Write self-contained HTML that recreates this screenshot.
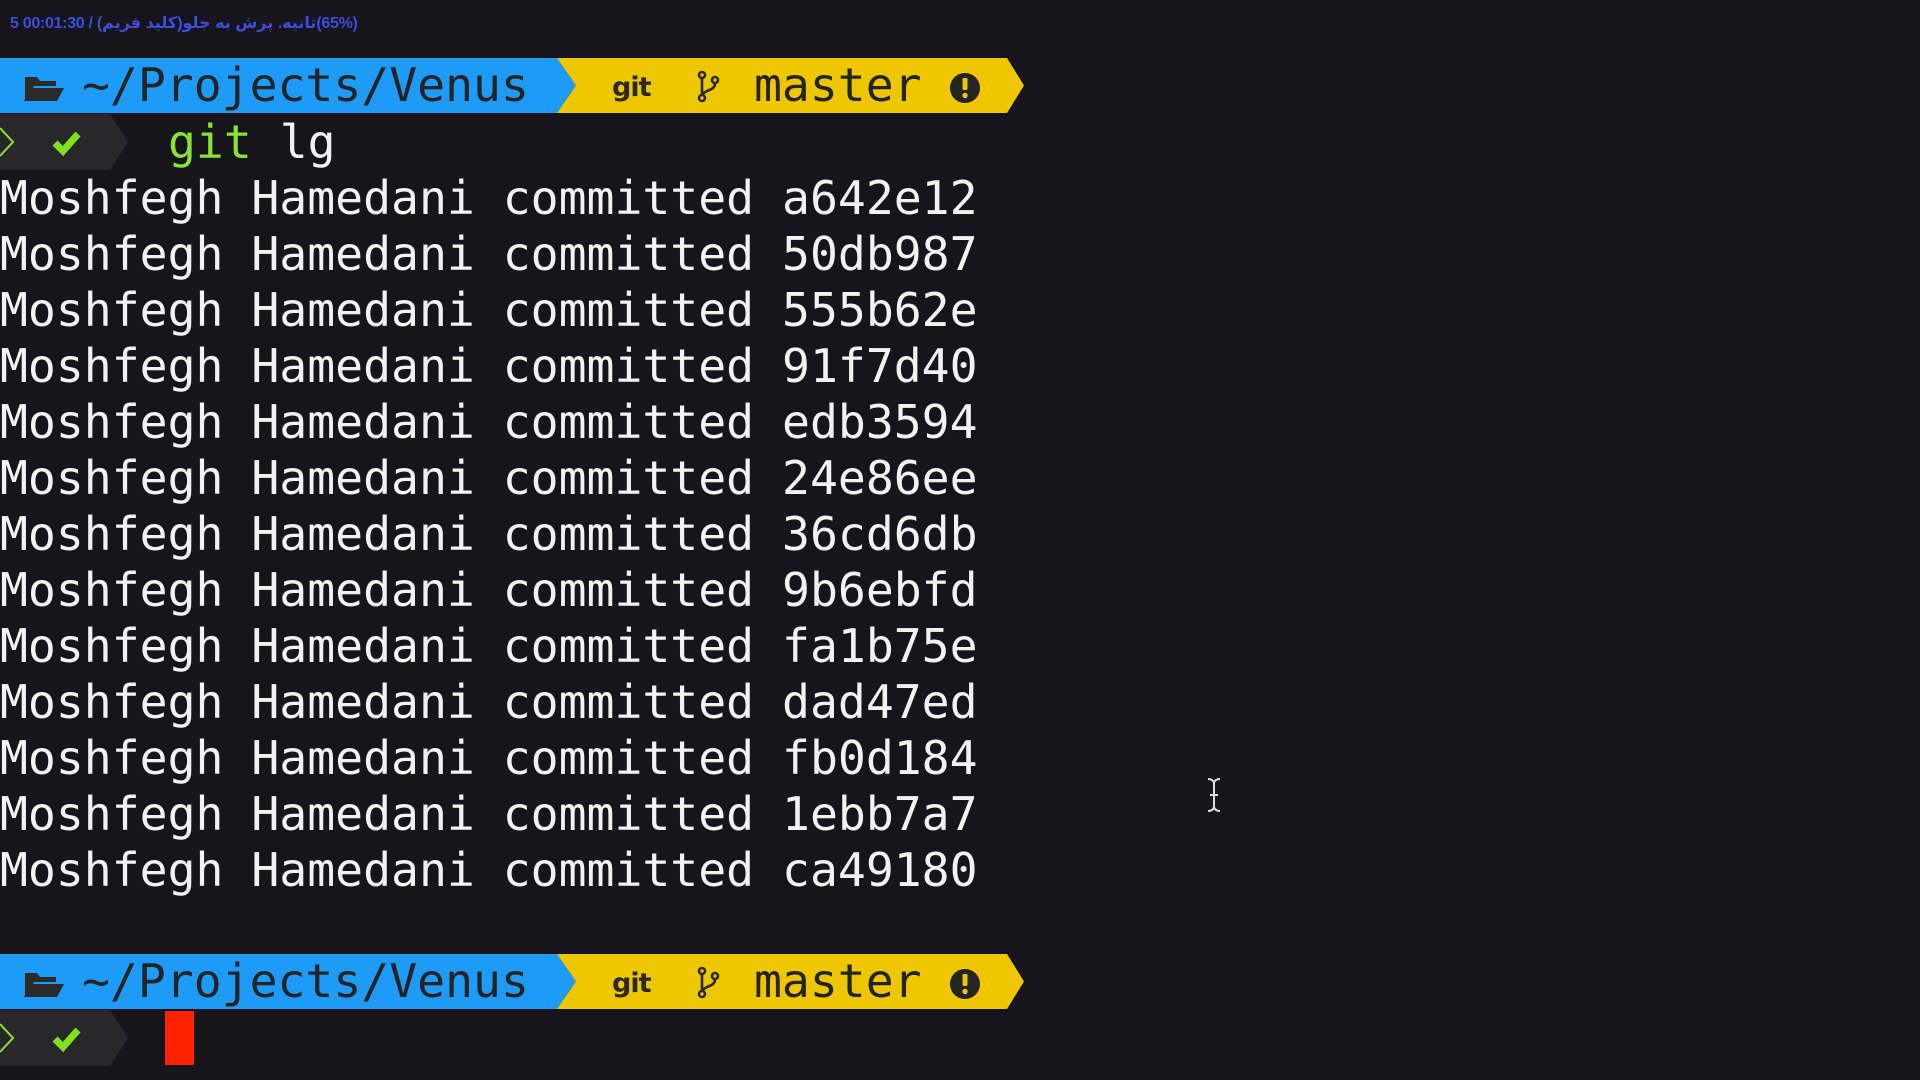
<!DOCTYPE html>
<html><head><meta charset="utf-8"><style>
html,body{margin:0;padding:0;background:#15151b;width:1920px;height:1080px;overflow:hidden;position:relative}
.m{font-family:"DejaVu Sans Mono","Liberation Mono",monospace;font-size:46.4px;line-height:56px;white-space:pre;position:absolute;left:0;color:#f2f2f2}
.ov{position:absolute;left:10px;top:13px;font-family:'Liberation Sans','DejaVu Sans',sans-serif;font-size:16px;font-weight:bold;color:#3b4fd8;white-space:nowrap;letter-spacing:-0.3px}
.ov span{display:inline-block}
</style></head><body>
<div class="ov"><span dir="ltr">5 00:01:30 /&nbsp;</span><span dir="rtl">ثانیه. پرش به جلو(کلید فریم)</span><span dir="ltr">(65%)</span></div>

<svg width="1040" height="56" style="position:absolute;left:0;top:58px" viewBox="0 0 1040 56">
<polygon points="0,0 557,0 576,27.5 557,55 0,55" fill="#1d9bf7"/>
<polygon points="557,0 1007,0 1024,27.5 1007,55 557,55 576,27.5" fill="#efc700"/>
<path d="M25 19h12l3 4h16v5H34l-7 14h-2z" fill="#2a2a2a"/>
<path d="M30 30h34l-7 13H24z" fill="#2a2a2a"/>
<text x="82" y="43" font-family="DejaVu Sans Mono,monospace" font-size="46.4" fill="#242424">~/Projects/Venus</text>
<text x="612" y="38" font-family="DejaVu Sans,sans-serif" font-weight="bold" font-size="27" fill="#2a2a2a" letter-spacing="-1">git</text>
<g stroke="#2a2a2a" stroke-width="2.6" fill="none"><circle cx="702" cy="17" r="3"/><circle cx="715" cy="22" r="3"/><circle cx="702" cy="40" r="3"/><path d="M702 20v17M715 25c0 8-9 6-13 12"/></g>
<text x="754" y="43" font-family="DejaVu Sans Mono,monospace" font-size="46.4" fill="#242424">master</text>
<circle cx="965" cy="30" r="15" fill="#242424"/><rect x="962.5" y="20" width="5" height="12" rx="1.5" fill="#efc700"/><circle cx="965" cy="37.5" r="2.7" fill="#efc700"/>
</svg>
<svg width="1040" height="56" style="position:absolute;left:0;top:954px" viewBox="0 0 1040 56">
<polygon points="0,0 557,0 576,27.5 557,55 0,55" fill="#1d9bf7"/>
<polygon points="557,0 1007,0 1024,27.5 1007,55 557,55 576,27.5" fill="#efc700"/>
<path d="M25 19h12l3 4h16v5H34l-7 14h-2z" fill="#2a2a2a"/>
<path d="M30 30h34l-7 13H24z" fill="#2a2a2a"/>
<text x="82" y="43" font-family="DejaVu Sans Mono,monospace" font-size="46.4" fill="#242424">~/Projects/Venus</text>
<text x="612" y="38" font-family="DejaVu Sans,sans-serif" font-weight="bold" font-size="27" fill="#2a2a2a" letter-spacing="-1">git</text>
<g stroke="#2a2a2a" stroke-width="2.6" fill="none"><circle cx="702" cy="17" r="3"/><circle cx="715" cy="22" r="3"/><circle cx="702" cy="40" r="3"/><path d="M702 20v17M715 25c0 8-9 6-13 12"/></g>
<text x="754" y="43" font-family="DejaVu Sans Mono,monospace" font-size="46.4" fill="#242424">master</text>
<circle cx="965" cy="30" r="15" fill="#242424"/><rect x="962.5" y="20" width="5" height="12" rx="1.5" fill="#efc700"/><circle cx="965" cy="37.5" r="2.7" fill="#efc700"/>
</svg>

<svg width="140" height="56" style="position:absolute;left:0;top:114px">
<polygon points="0,0 110,0 128,28 110,56 0,56" fill="#28282a"/>
<polyline points="0,14 13,28 0,42" fill="none" stroke="#8ae234" stroke-width="2"/>
<path d="M55 29l8 8 15-17" fill="none" stroke="#7ee21c" stroke-width="7"/>
</svg>
<svg width="140" height="56" style="position:absolute;left:0;top:1010px">
<polygon points="0,0 110,0 128,28 110,56 0,56" fill="#28282a"/>
<polyline points="0,14 13,28 0,42" fill="none" stroke="#8ae234" stroke-width="2"/>
<path d="M55 29l8 8 15-17" fill="none" stroke="#7ee21c" stroke-width="7"/>
</svg>
<div class="m" style="left:168px;top:114px"><span style="color:#8ae234">git</span> lg</div>
<div style="position:absolute;left:165px;top:1011px;width:29px;height:54px;background:#ff2200"></div>

<div class="m" style="top:170px">Moshfegh Hamedani committed a642e12
Moshfegh Hamedani committed 50db987
Moshfegh Hamedani committed 555b62e
Moshfegh Hamedani committed 91f7d40
Moshfegh Hamedani committed edb3594
Moshfegh Hamedani committed 24e86ee
Moshfegh Hamedani committed 36cd6db
Moshfegh Hamedani committed 9b6ebfd
Moshfegh Hamedani committed fa1b75e
Moshfegh Hamedani committed dad47ed
Moshfegh Hamedani committed fb0d184
Moshfegh Hamedani committed 1ebb7a7
Moshfegh Hamedani committed ca49180</div>

<svg width="20" height="40" style="position:absolute;left:1204px;top:776px"><path d="M4 3q5 0 6 4q1-4 6-4M10 7v24M4 35q5 0 6-4q1 4 6 4M6 19h8" stroke="#ddd" stroke-width="2" fill="none"/></svg>
</body></html>
